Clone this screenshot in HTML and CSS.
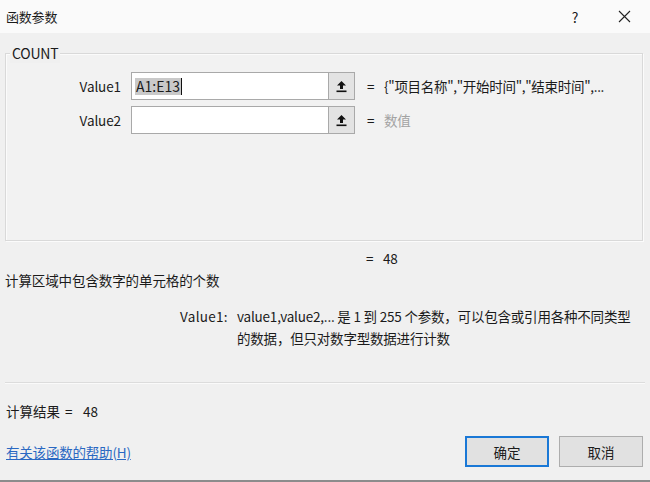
FILE: index.html
```html
<!DOCTYPE html>
<html lang="zh-CN">
<head>
<meta charset="utf-8">
<title>函数参数</title>
<link rel="stylesheet" href="styles.css">
</head>
<body>
<div class="dialog">
  <div class="titlebar">
    <span class="title">函数参数</span>
    <span class="help">?</span>
    <span class="close">
      <svg width="13" height="13" viewBox="0 0 13 13"><path d="M1 1 L12 12 M12 1 L1 12" stroke="#222" stroke-width="1.1" fill="none"/></svg>
    </span>
  </div>
  <div class="main">
    <fieldset class="group">
      <legend class="legend">COUNT</legend>
      <div class="row">
        <label class="arg-label">Value1</label>
        <div class="field">
          <div class="input"><span class="sel">A1:E13</span><span class="caret"></span></div>
          <div class="ref-btn">
            <svg width="11" height="13" viewBox="0 0 11 13"><path d="M5.5 1 L10 5.5 H7 V9 H4 V5.5 H1 Z" fill="#111"/><rect x="0.5" y="10.5" width="10" height="1.6" fill="#111"/></svg>
          </div>
        </div>
        <span class="eq">=</span>
        <span class="val">{"项目名称","开始时间","结束时间",...</span>
      </div>
      <div class="row">
        <label class="arg-label">Value2</label>
        <div class="field">
          <div class="input"></div>
          <div class="ref-btn">
            <svg width="11" height="13" viewBox="0 0 11 13"><path d="M5.5 1 L10 5.5 H7 V9 H4 V5.5 H1 Z" fill="#111"/><rect x="0.5" y="10.5" width="10" height="1.6" fill="#111"/></svg>
          </div>
        </div>
        <span class="eq">=</span>
        <span class="val muted">数值</span>
      </div>
    </fieldset>

    <div class="result-row"><span class="eq">=</span><span class="val">48</span></div>
    <div class="summary">计算区域中包含数字的单元格的个数</div>
    <div class="desc">
      <span class="desc-label">Value1:</span>
      <span class="desc-text">value1,value2,... 是 1 到 255 个参数，可以包含或引用各种不同类型<br>的数据，但只对数字型数据进行计数</span>
    </div>
    <div class="separator"></div>
    <div class="calc"><span class="calc-label">计算结果</span><span class="calc-eq">=</span><span>48</span></div>
    <div class="footer">
      <a class="help-link" href="#">有关该函数的帮助(H)</a>
      <div class="buttons">
        <button class="btn btn-default">确定</button>
        <button class="btn">取消</button>
      </div>
    </div>
  </div>
  <div class="taskbar"></div>
</div>
</body>
</html>
```

FILE: styles.css
```css
html, body {
  margin: 0;
  padding: 0;
}
body {
  width: 650px;
  height: 482px;
  overflow: hidden;
  background: #f0f0f0;
  font-family: "Noto Sans CJK SC", "Microsoft YaHei", "Noto Sans", sans-serif;
  font-size: 13.5px;
  color: #1b1b1b;
}
.dialog {
  height: 482px;
  display: flex;
  flex-direction: column;
}
.titlebar {
  height: 33px;
  flex: none;
  background: #fafafa;
  display: flex;
  align-items: center;
  padding-left: 6px;
}
.title {
  font-size: 13px;
  letter-spacing: -0.2px;
}
.help {
  margin-left: auto;
  font-size: 14px;
  width: 12px;
  text-align: center;
  margin-right: 37px;
}
.close {
  width: 13px;
  height: 13px;
  margin-right: 19px;
  display: flex;
}
.main {
  flex: 1;
  padding: 0 5px 0 5px;
}
.group {
  margin: 10px 2px 0 0;
  padding: 9px 0 106px 0;
  border: 1px solid #d9d9d9;
  box-shadow: inset 1px 1px 0 #fbfbfb, 1px 1px 0 #fbfbfb;
  background: #f2f2f2;
  min-width: 0;
}
.legend {
  margin-left: 4px;
  padding: 0 2px;
  line-height: 20px;
  font-size: 14px;
  letter-spacing: -0.2px;
  background: #f0f0f0;
}
.row {
  display: flex;
  align-items: center;
  height: 28px;
}
.row + .row {
  margin-top: 6px;
}
.arg-label {
  width: 115px;
  text-align: right;
  margin-right: 10px;
  font-size: 13.5px;
  letter-spacing: -0.1px;
}
.field {
  display: flex;
  height: 28px;
}
.input {
  height: 26px;
  border: 1px solid #a9a9a9;
  background: #fff;
  display: flex;
  align-items: center;
  padding-left: 3px;
  width: 193px;
}
.sel {
  background: #c9c9c9;
  line-height: 17px;
  padding: 0 1px;
  font-size: 14px;
}
.caret {
  width: 1px;
  height: 17px;
  background: #111;
}
.ref-btn {
  width: 25px;
  height: 26px;
  border: 1px solid #a9a9a9;
  border-left: none;
  background: #e3e3e3;
  display: flex;
  align-items: center;
  justify-content: center;
}
.eq {
  margin-left: 12px;
  width: 17px;
  flex: none;
}
.val {
  white-space: nowrap;
  letter-spacing: -0.3px;
}
.muted {
  color: #a3a3a3;
}
.result-row {
  display: flex;
  margin-top: 7px;
  padding-left: 349px;
  line-height: 20px;
}
.summary {
  margin-top: 2px;
  line-height: 20px;
  letter-spacing: -0.1px;
}
.desc {
  display: flex;
  margin-top: 15px;
  line-height: 22px;
  padding-left: 175px;
  white-space: nowrap;
}
.desc-label {
  width: 52px;
  margin-right: 5px;
  letter-spacing: 0.3px;
}
.desc-text {
  letter-spacing: -0.2px;
}
.separator {
  margin-top: 33px;
  height: 1px;
  background: #dcdcdc;
  box-shadow: 0 1px 0 #fafafa;
}
.calc {
  margin-top: 18px;
  line-height: 20px;
  padding-left: 1px;
  display: flex;
}
.calc-label {
  width: 59px;
}
.calc-eq {
  width: 18px;
}
.footer {
  margin-top: 15px;
  display: flex;
  align-items: center;
  justify-content: space-between;
  padding-left: 1px;
}
.help-link {
  color: #2a68c2;
  text-decoration: underline;
  letter-spacing: -0.2px;
}
.buttons {
  display: flex;
  gap: 10px;
  margin-right: 2px;
}
.btn {
  width: 84px;
  height: 31px;
  font-family: inherit;
  font-size: 13.5px;
  color: #1b1b1b;
  background: #e1e1e1;
  border: 1px solid #adadad;
  padding: 0;
}
.btn-default {
  border: 2px solid #1a78d6;
}
.taskbar {
  height: 2px;
  flex: none;
  background: #8c8c8c;
}
```
